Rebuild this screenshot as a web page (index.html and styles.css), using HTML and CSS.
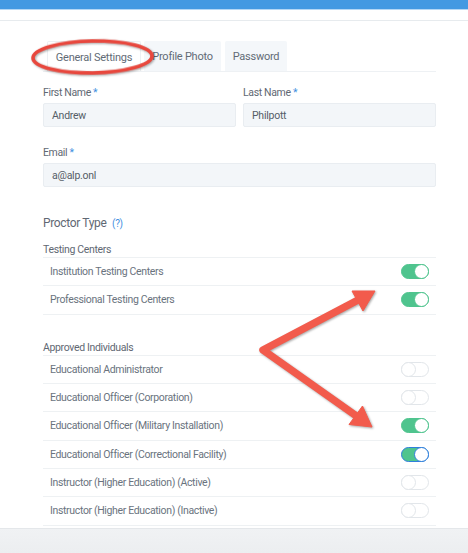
FILE: index.html
```html
<!DOCTYPE html>
<html lang="en">
<head>
<meta charset="utf-8">
<title>General Settings</title>
<link rel="stylesheet" href="styles.css">
</head>
<body>
<div class="page">
  <div class="topbar"></div>
  <div class="subbar"></div>
  <main class="content">
    <nav class="tabs">
      <span class="tab active tab-general">General Settings</span>
      <span class="tab tab-photo">Profile Photo</span>
      <span class="tab tab-password">Password</span>
    </nav>

    <div class="row-fields">
      <div class="field">
        <label class="label">First Name <span class="req">*</span></label>
        <div class="input">Andrew</div>
      </div>
      <div class="field">
        <label class="label">Last Name <span class="req">*</span></label>
        <div class="input">Philpott</div>
      </div>
    </div>

    <div class="field email">
      <label class="label">Email <span class="req">*</span></label>
      <div class="input">a@alp.onl</div>
    </div>

    <h2 class="section-title">Proctor Type <span class="help">(?)</span></h2>

    <div class="group-title">Testing Centers</div>
    <ul class="list">
      <li class="item"><span>Institution Testing Centers</span><span class="toggle on"></span></li>
      <li class="item"><span>Professional Testing Centers</span><span class="toggle on"></span></li>
    </ul>

    <div class="group-title second">Approved Individuals</div>
    <ul class="list">
      <li class="item"><span>Educational Administrator</span><span class="toggle"></span></li>
      <li class="item"><span>Educational Officer (Corporation)</span><span class="toggle"></span></li>
      <li class="item"><span>Educational Officer (Military Installation)</span><span class="toggle on"></span></li>
      <li class="item"><span>Educational Officer (Correctional Facility)</span><span class="toggle on focus"></span></li>
      <li class="item"><span>Instructor (Higher Education) (Active)</span><span class="toggle"></span></li>
      <li class="item"><span>Instructor (Higher Education) (Inactive)</span><span class="toggle"></span></li>
    </ul>
  </main>
  <footer class="footer"></footer>

  <svg class="annotations" width="468" height="553" viewBox="0 0 468 553" aria-hidden="true">
    <ellipse cx="92.5" cy="57" rx="59.5" ry="16" class="ring" transform="rotate(-1 92.5 57)"/>
    <g class="arrow">
      <path d="M358 300 L263 350 L355 415" fill="none" stroke-width="7.5" stroke-linejoin="round" stroke-linecap="round"/>
      <polygon points="375,291 363,311 352,291"/>
      <polygon points="372,427 349,424.5 362.5,406"/>
    </g>
  </svg>
</div>
</body>
</html>
```

FILE: styles.css
```css
* { box-sizing: border-box; }

html, body {
  margin: 0;
  padding: 0;
}

body {
  font-family: Roboto, "Noto Sans", "Liberation Sans", sans-serif;
  color: #5f6873;
  background: #ffffff;
}

.page {
  position: relative;
  width: 468px;
  height: 553px;
  overflow: hidden;
  display: flex;
  flex-direction: column;
}

.topbar {
  height: 10px;
  background: #4399e2;
  border-bottom: 1px solid #b4d7f5;
}

.subbar {
  height: 11px;
  border-bottom: 1px solid #e7ebee;
}

.content {
  padding: 20px 32px 0 43px;
}

.tabs {
  display: flex;
  gap: 3px;
  height: 31px;
  padding-left: 4px;
  border-bottom: 1px solid #eef1f4;
}

.tab {
  display: flex;
  align-items: center;
  justify-content: center;
  padding-top: 1px;
  font-size: 11px;
  letter-spacing: -0.25px;
  color: #626b76;
  background: #f4f7fa;
  border-radius: 2px 2px 0 0;
}

.tab-general { width: 94px; }
.tab-photo { width: 77px; }
.tab-password { width: 62px; margin-left: 1px; }

.tab.active {
  background: #ffffff;
  border: 1px solid #edf0f3;
  border-bottom: none;
}

.row-fields {
  display: flex;
  gap: 7px;
  margin-top: 14px;
}

.field {
  flex: 1;
  display: flex;
  flex-direction: column;
}

.label {
  font-size: 10.5px;
  letter-spacing: -0.35px;
  line-height: 14px;
  height: 14px;
  color: #5f6873;
  margin-bottom: 3px;
}

.req {
  color: #3f8fe0;
}

.input {
  height: 24px;
  display: flex;
  align-items: center;
  padding-left: 8px;
  font-size: 10.5px;
  letter-spacing: -0.25px;
  color: #555d67;
  background: #f3f6f9;
  border: 1px solid #e9edf1;
  border-radius: 2px;
}

.email {
  margin-top: 19px;
}

.section-title {
  margin: 28px 0 0 0;
  font-size: 12px;
  letter-spacing: -0.35px;
  line-height: 16px;
  font-weight: 400;
  color: #5f6873;
}

.help {
  color: #3f8fe0;
  font-size: 10px;
  margin-left: 3px;
}

.group-title {
  margin-top: 11px;
  font-size: 10.5px;
  letter-spacing: -0.35px;
  line-height: 14px;
  color: #5f6873;
}

.group-title.second {
  margin-top: 26px;
}

.list {
  list-style: none;
  margin: 0;
  padding: 0;
  border-top: 1px solid #eef1f3;
}

.item {
  height: 28.33px;
  display: flex;
  align-items: center;
  justify-content: space-between;
  padding: 0 7px;
  font-size: 10.5px;
  letter-spacing: -0.35px;
  color: #6a737e;
  border-bottom: 1px solid #eef1f3;
}

.toggle {
  position: relative;
  width: 28px;
  height: 15px;
  border-radius: 8px;
  background: #ffffff;
  border: 1px solid #e2e6ea;
}

.toggle::after {
  content: "";
  position: absolute;
  top: -1px;
  left: -1px;
  width: 15px;
  height: 15px;
  border-radius: 50%;
  background: #ffffff;
  border: 1px solid #e2e6ea;
  box-sizing: border-box;
}

.toggle.on {
  background: #4fc48e;
  border-color: #4fc48e;
}

.toggle.on::after {
  left: auto;
  right: -1px;
  border-color: #4fc48e;
}

.toggle.focus {
  border-color: #2f7fdc;
}

.toggle.focus::after {
  border-color: #2f7fdc;
}

.footer {
  flex: 1;
  margin-top: 2px;
  background: linear-gradient(#f0f2f4, #eceef0);
  border-top: 1px solid #e4e7ea;
}

.annotations {
  position: absolute;
  left: 0;
  top: 0;
  pointer-events: none;
}

.ring {
  fill: none;
  stroke: #e8473d;
  stroke-width: 3.6;
  filter: drop-shadow(1px 1px 1px rgba(0, 0, 0, 0.35));
}

.arrow {
  fill: #f25b4c;
  stroke: #f25b4c;
  filter: drop-shadow(1px 1.5px 1px rgba(0, 0, 0, 0.35));
}

.arrow polygon {
  stroke-width: 1;
  stroke-linejoin: round;
}
```
